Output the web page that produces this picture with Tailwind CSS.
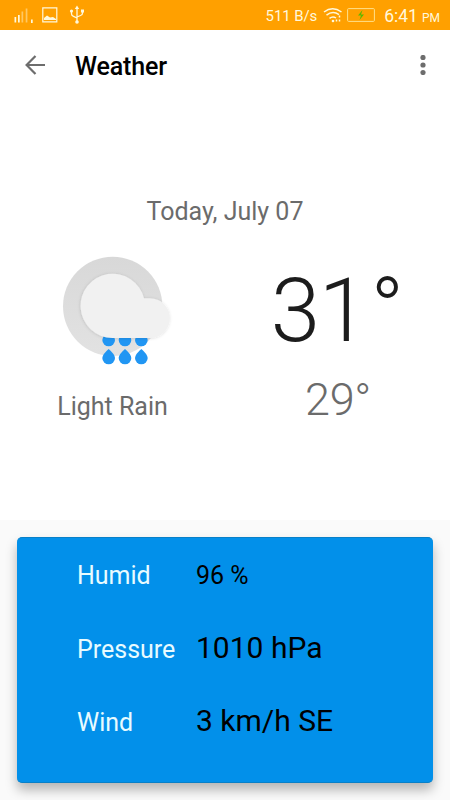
<!DOCTYPE html>
<html lang="en">
<head>
    <meta charset="UTF-8">
    <meta name="viewport" content="width=device-width, initial-scale=1.0">
    <title>Weather</title>
    <script src="https://cdn.jsdelivr.net/npm/@tailwindcss/browser@4"></script>
</head>
<body class="h-[800px] overflow-hidden bg-[#fafafa] font-['Roboto',sans-serif] text-[25px] leading-[30px] flex flex-col">
    <!-- Status bar -->
    <div class="h-[30px] shrink-0 bg-[#ffa000] text-[#fff8dc] flex items-center justify-between pl-3.5 pr-[10px]">
        <div class="flex items-center">
            <svg class="w-5 h-[18px]" viewBox="0 0 20 18" fill="currentColor">
                <path d="M.5 11h1.700v5.500H.5zM4 9h1.700v7.500H4z" />
                <path opacity=".45" d="M7.500 5.500h1.700v11H7.500zM11.700 2.500h1.700v14h-1.700z" />
                <path d="M17 13.500h1.700v3.500H17z" />
            </svg>
            <svg class="w-4 h-4 ml-2" viewBox="0 0 16 16" fill="none" stroke="currentColor">
                <path stroke-width="1.200" d="M.8.800h14v14H.8z" />
                <path fill="currentColor" stroke="none" d="M2 13v-2l3-2.500 3 2 3-.500 3 2v1z" />
            </svg>
            <svg class="w-4 h-5 ml-[11px]" viewBox="0 0 16 20" fill="none" stroke="currentColor" stroke-width="1.300">
                <path d="M8 3v14M2.500 6.500v2.200q0 1.800 2 2.600L8 13M13.500 6.500v1.700q0 1.500-2 2.300L8 12" />
                <path fill="currentColor" stroke="none" d="M8 .500l2.200 3.500H5.800zM12 4.500h3v3h-3z" />
                <circle cx="8" cy="17" r="1.800" fill="currentColor" stroke="none" />
                <circle cx="2.500" cy="6" r="1.600" fill="currentColor" stroke="none" />
            </svg>
        </div>
        <div class="flex items-center">
            <span class="text-[15px] tracking-[-0.1px] mt-px">511 B/s</span>
            <svg class="w-5 h-4 ml-1.5" viewBox="0 0 20 16" fill="none" stroke="currentColor" stroke-width="1.500">
                <path d="M1 5q8.500-6.500 17.500 0M3.500 8.200q6.300-5 12.500-.500M6.500 11.300q3.300-2.600 6.500-.300" />
                <circle cx="10" cy="14" r="1.300" fill="currentColor" stroke="none" />
                <path d="M13.500 12.500v2M16.500 8.500v2M16.500 12.500v2" />
            </svg>
            <svg class="w-7 h-[14px] ml-1" viewBox="0 0 28 14" fill="none">
                <rect x=".6" y=".6" width="26.800" height="12.800" rx="1" stroke="#ffe08a" stroke-width="1" />
                <path fill="#5cb800" d="M15.500 2l-4.500 5.500h3L12.500 12l4.500-5.500h-3z" />
            </svg>
            <span class="text-[17.500px] ml-[9px] mt-0.5">6:41</span>
            <span class="text-[12px] ml-1 mt-[5px]">PM</span>
        </div>
    </div>

    <main class="h-[490px] shrink-0 bg-white">
        <!-- Toolbar -->
        <header class="h-[73px] flex items-center pl-[25px] pr-[24.5px]">
            <svg class="w-5 h-5 -mt-1" viewBox="0 0 20 20" fill="none" stroke="#6d6d6d" stroke-width="2.200">
                <path d="M20 10H2M10.500 1L1.600 10l8.900 9" />
            </svg>
            <h1 class="ml-[30px] font-medium tracking-[-0.15px] text-black">Weather</h1>
            <svg class="w-[6px] h-5 ml-auto -mt-1" viewBox="0 0 6 20" fill="#6d6d6d">
                <circle cx="3" cy="2.500" r="2.600" />
                <circle cx="3" cy="10" r="2.600" />
                <circle cx="3" cy="17.500" r="2.600" />
            </svg>
        </header>

        <p class="mt-[94px] text-center text-[#6b6b6b]">Today, July 07</p>

        <div class="mt-[18px] grid grid-cols-2 text-[#6b6b6b]">
            <div class="flex flex-col items-center">
                <svg class="w-[135px] h-[130px] ml-[9px]" viewBox="0 0 405 390">
                    <defs>
                        <linearGradient id="disc" x1="0" y1="0" x2="0" y2="1">
                            <stop offset="0" stop-color="#d8d8d8" />
                            <stop offset="1" stop-color="#e2e2e2" />
                        </linearGradient>
                        <filter id="soft" x="-20%" y="-20%" width="140%" height="140%">
                            <feDropShadow dx="-1" dy="1" stdDeviation="4" flood-color="#000" flood-opacity=".15" />
                        </filter>
                    </defs>
                    <circle cx="188" cy="184" r="149" fill="url(#disc)" />
                    <!-- Rain drops, the upper row is tucked under the cloud -->
                    <g fill="#2196f3">
                        <path id="drop" d="M176 312q18 15 19 27a19 19 0 0 1-38 0q1-12 19-27z" />
                        <use href="#drop" x="49" />
                        <use href="#drop" x="98" />
                        <use href="#drop" y="-54" />
                        <use href="#drop" x="49" y="-54" />
                        <use href="#drop" x="98" y="-54" />
                    </g>
                    <path filter="url(#soft)" fill="#f1f1f1" d="M187 279a96.500 96.500 0 1 1 95-119h18a59.500 59.500 0 0 1 0 119z" />
                </svg>
                <p class="mt-[17px]">Light Rain</p>
            </div>
            <div class="flex flex-col items-center font-light">
                <p class="mt-[21px] text-[89px] leading-[90px] text-[#1c1c1c]"><span class="tracking-[-1.500px]">3</span><span class="tracking-[2.500px]">1</span>°</p>
                <p class="mt-[21px] ml-px text-[45px] leading-[46px] tracking-[-0.3px]">29°</p>
            </div>
        </div>
    </main>

    <!-- Details card -->
    <section class="mt-[17px] mx-[17px] h-[246px] shrink-0 rounded-[5px] bg-[#0290ea] border-y border-[#0880c8] shadow-[0_7px_12px_rgba(0,0,0,0.28)] pl-[60px] pt-px">
        <dl class="grid grid-cols-[119px_1fr] auto-rows-[73.5px] items-baseline text-[#e8fbff]">
            <dt class="pt-[22px]">Humid</dt>
            <dd class="text-black">96 %</dd>
            <dt class="pt-[22px]">Pressure</dt>
            <dd class="text-[30px] text-black">1010 hPa</dd>
            <dt class="pt-[22px]">Wind</dt>
            <dd class="text-[30px] text-black">3 km/h SE</dd>
        </dl>
    </section>
</body>
</html>
